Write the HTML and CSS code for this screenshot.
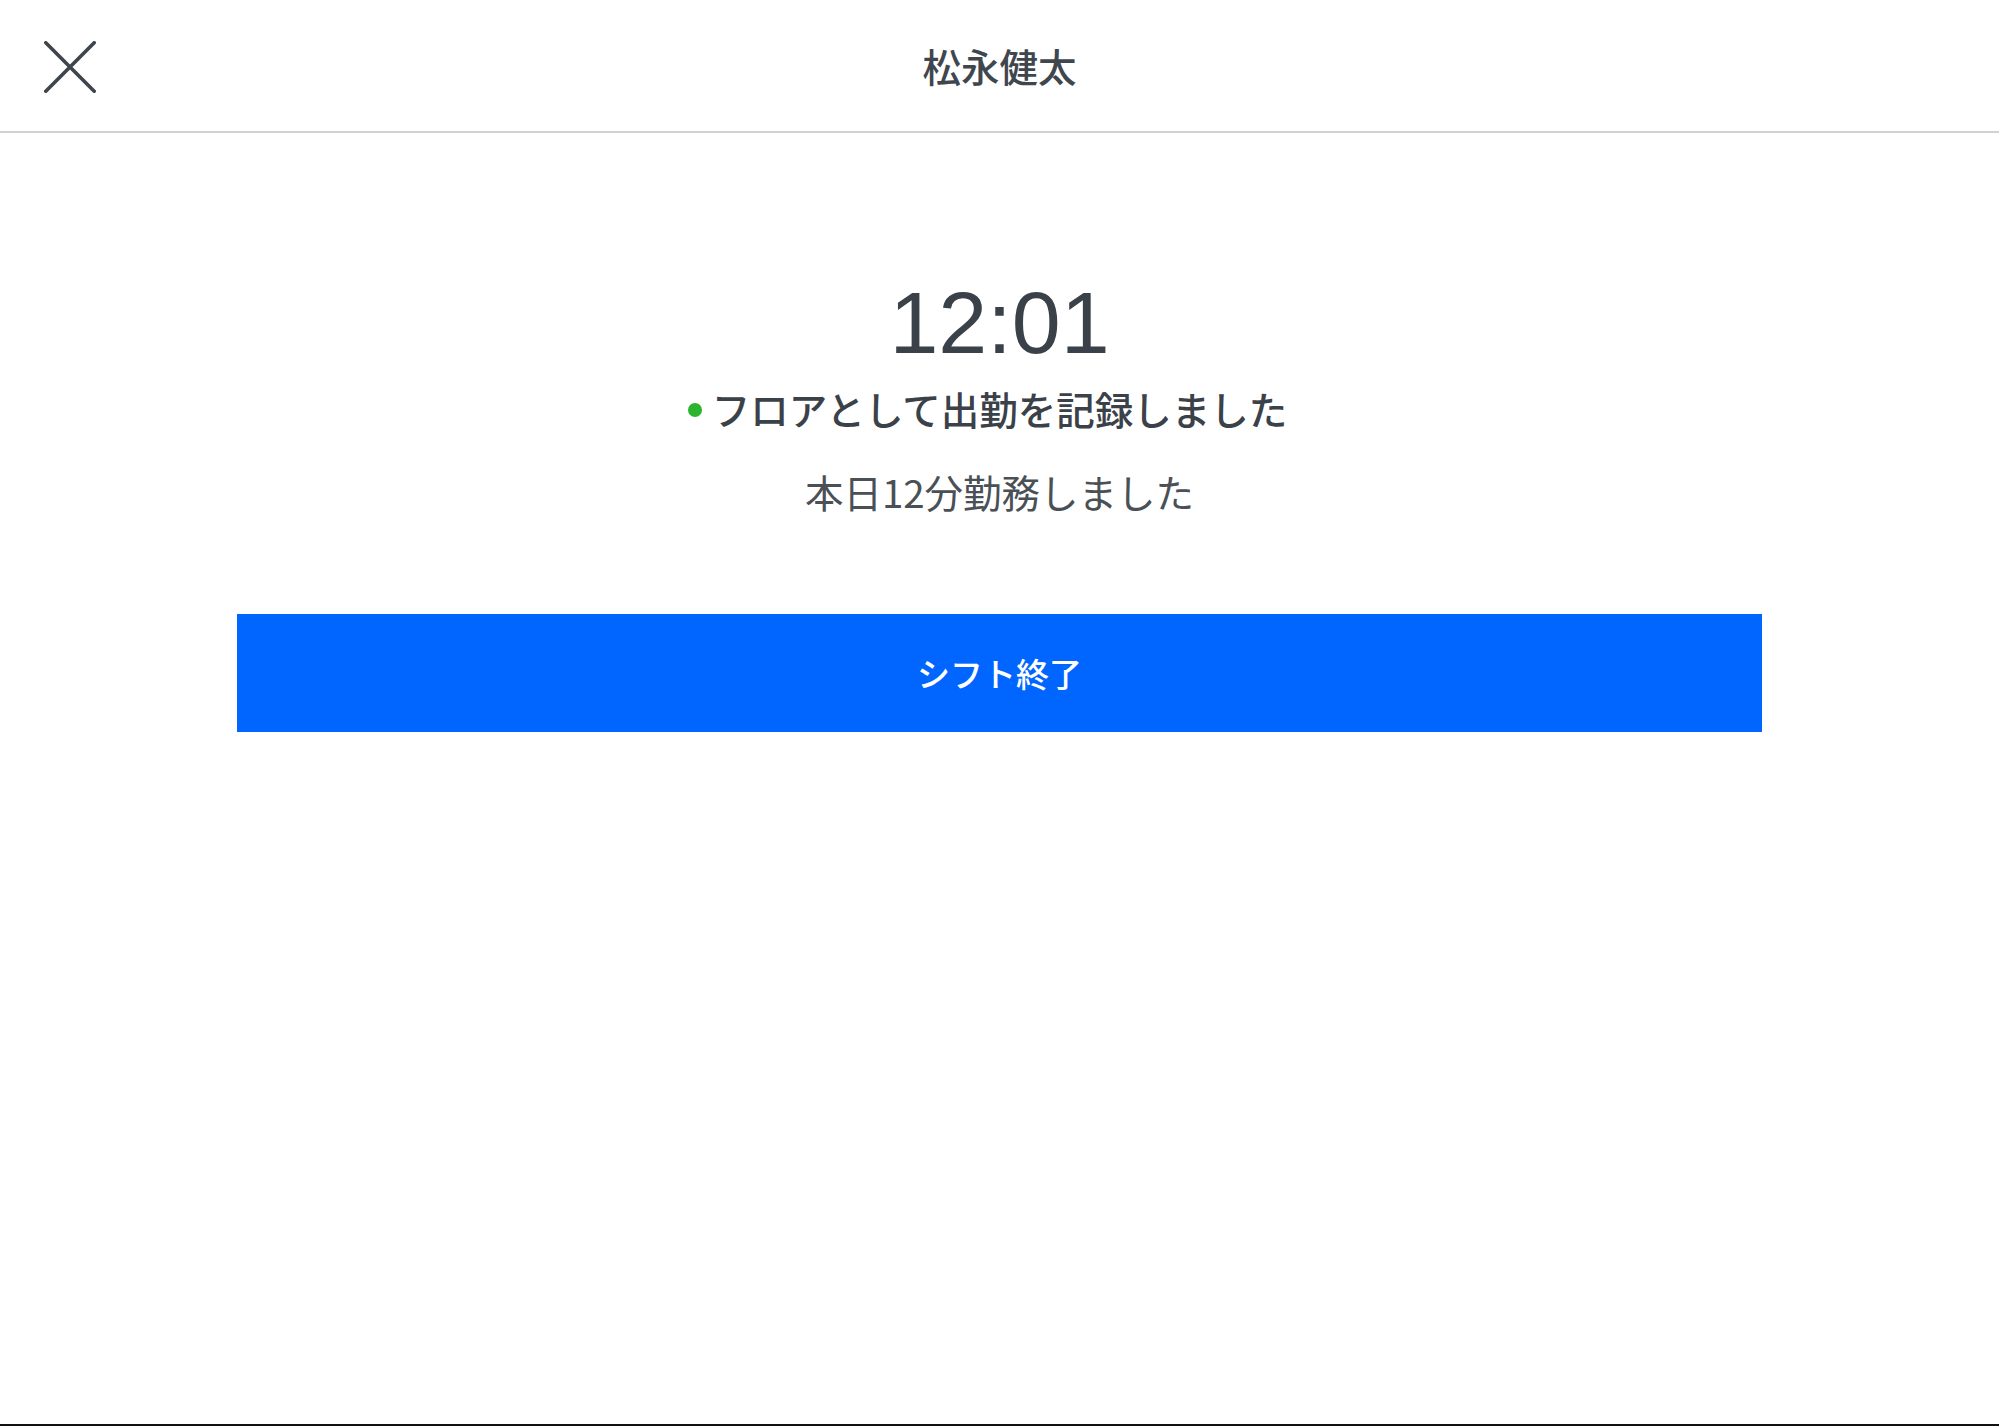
FILE: index.html
```html
<!DOCTYPE html>
<html lang="ja">
<head>
<meta charset="utf-8">
<title>松永健太</title>
<link rel="stylesheet" href="styles.css">
</head>
<body>
<div class="screen">
  <header class="topbar">
    <button class="close" aria-label="閉じる">
      <svg width="52" height="52" viewBox="0 0 52 52" fill="none" stroke="#3f454c" stroke-width="3.6" stroke-linecap="round">
        <path d="M1.8 1.8 L50.2 50.2 M50.2 1.8 L1.8 50.2"/>
      </svg>
    </button>
    <h1 class="title">松永健太</h1>
    <div class="spacer"></div>
  </header>
  <main class="content">
    <div class="clock">12:01</div>
    <p class="status"><span class="dot"></span>フロアとして出勤を記録しました</p>
    <p class="worked">本日12分勤務しました</p>
    <button class="end-shift">シフト終了</button>
  </main>
</div>
</body>
</html>
```
FILE: styles.css
```css
html, body {
  margin: 0;
  padding: 0;
  background: #ffffff;
}
body {
  font-family: "Noto Sans CJK JP", "Noto Sans", sans-serif;
  color: #40464d;
}
.screen {
  height: 1424px;
  border-bottom: 2px solid #111;
  display: flex;
  flex-direction: column;
}
.topbar {
  height: 131px;
  border-bottom: 2px solid #d2d2d2;
  display: grid;
  grid-template-columns: 1fr auto 1fr;
  align-items: center;
}
.close {
  justify-self: start;
  margin-left: 44px;
  margin-top: 2px;
  padding: 0;
  border: 0;
  background: none;
  display: flex;
}
.title {
  margin: 0;
  font-size: 38.5px;
  font-weight: 500;
  color: #40464d;
  line-height: 1;
}
.content {
  display: flex;
  flex-direction: column;
  align-items: center;
}
.clock {
  margin-top: 146px;
  font-family: "Liberation Sans", Arial, sans-serif;
  font-size: 88px;
  line-height: 1;
  color: #3b4148;
}
.status {
  margin: 18px 0 0;
  padding-right: 24px;
  font-size: 38.5px;
  line-height: 1.2;
  font-weight: 500;
  color: #3b4148;
  display: flex;
  align-items: center;
  gap: 10px;
}
.dot {
  width: 14px;
  height: 14px;
  border-radius: 50%;
  background: #2bb52e;
  margin-top: 4px;
}
.worked {
  margin: 37px 0 0;
  font-size: 38.5px;
  line-height: 1.2;
  font-weight: 400;
  color: #4a5056;
}
.end-shift {
  align-self: stretch;
  margin: 100px 237px 0;
  height: 118px;
  border: 0;
  background: #0066ff;
  color: #ffffff;
  font-family: "Noto Sans CJK JP", "Noto Sans", sans-serif;
  font-size: 33px;
  font-weight: 500;
  padding: 0;
}
```
